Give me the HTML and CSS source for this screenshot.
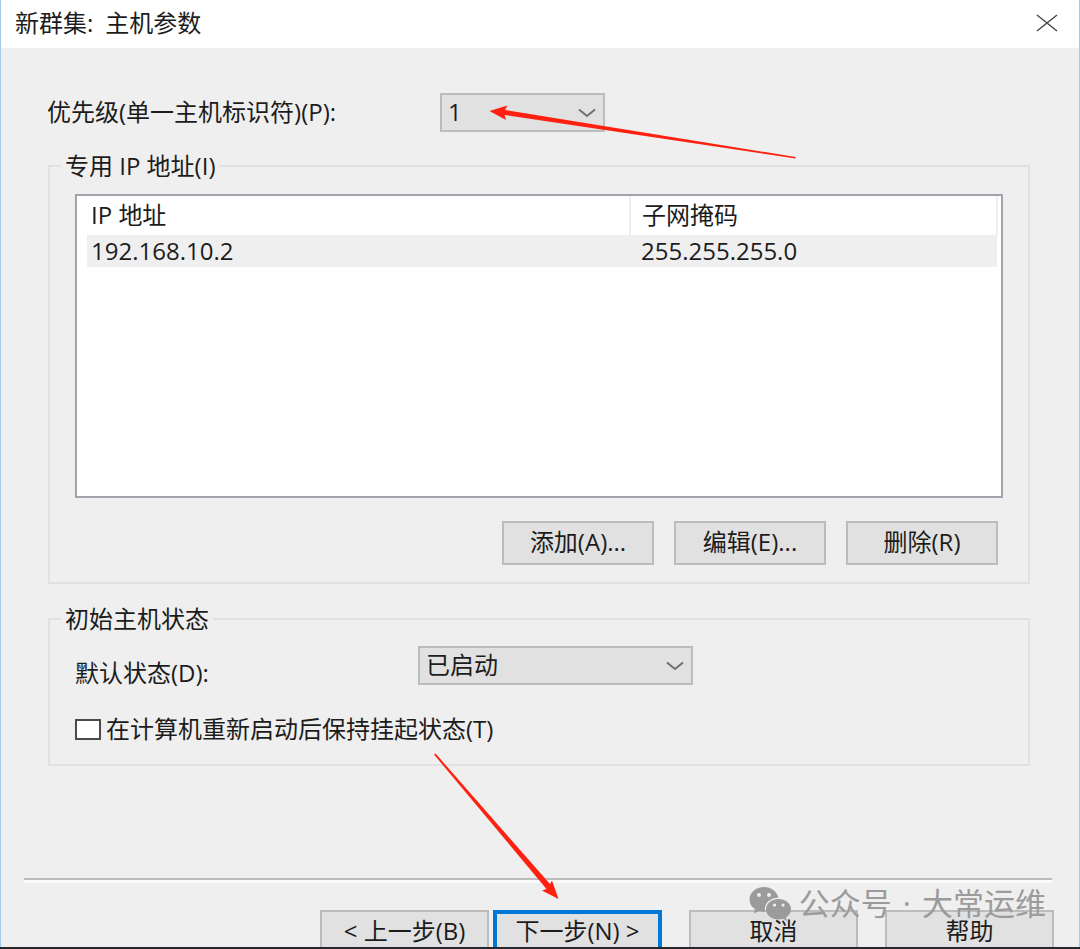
FILE: index.html
```html
<!DOCTYPE html>
<html lang="zh-CN">
<head>
    <meta charset="UTF-8">
    <meta name="viewport" content="width=device-width, initial-scale=1.0">
    <title>新群集: 主机参数</title>
    <link rel="stylesheet" href="styles.css">
</head>
<body>

    <div class="dialog">
        <header class="title-bar">
            <h1><span>新群集:</span> <span>主机参数</span></h1>
            <button type="button" class="close-button" aria-label="关闭">
                <svg width="22" height="18" viewBox="0 0 22 18"><path d="M1 1L21 17M21 1L1 17" stroke="#4a4a4a" stroke-width="1.5" fill="none"/></svg>
            </button>
        </header>

        <form class="dialog-body">
            <div class="field-row">
                <label for="priority">优先级(单一主机标识符)(P):</label>
                <div class="select-box priority-box">
                    <select id="priority">
                        <option>1</option>
                    </select>
                    <svg class="chevron" width="18" height="10" viewBox="0 0 18 10"><path d="M1 1.5L9 8L17 1.5" stroke="#707070" stroke-width="2" fill="none"/></svg>
                    <svg class="arrow arrow-priority" width="308" height="56" viewBox="0 0 308 56"><path d="M0.500 7L18.500 1.500L16 6L306.500 53V54.500L15.500 11L17 16Z" fill="#ff2010"/></svg>
                </div>
            </div>

            <fieldset class="ip-group">
                <legend>专用 IP 地址(I)</legend>
                <div class="list-view">
                    <table>
                        <thead>
                            <tr><th>IP 地址</th><th>子网掩码</th></tr>
                        </thead>
                        <tbody>
                            <tr><td>192.168.10.2</td><td>255.255.255.0</td></tr>
                        </tbody>
                    </table>
                </div>
                <div class="list-buttons">
                    <button type="button">添加(A)...</button>
                    <button type="button">编辑(E)...</button>
                    <button type="button">删除(R)</button>
                </div>
            </fieldset>

            <fieldset class="state-group">
                <legend>初始主机状态</legend>
                <div class="field-row">
                    <label for="state">默认状态(D):</label>
                    <div class="select-box state-box">
                        <select id="state">
                            <option>已启动</option>
                        </select>
                        <svg class="chevron" width="18" height="10" viewBox="0 0 18 10"><path d="M1 1.5L9 8L17 1.5" stroke="#707070" stroke-width="2" fill="none"/></svg>
                    </div>
                </div>
                <div class="check-row">
                    <input type="checkbox" id="keep-suspended">
                    <label for="keep-suspended">在计算机重新启动后保持挂起状态(T)</label>
                </div>
            </fieldset>
        </form>

        <footer class="dialog-footer">
            <button type="button">&lt; 上一步(B)</button>
            <button type="button" class="next-button">下一步(N) &gt;
                <svg class="arrow arrow-next" width="128" height="148" viewBox="0 0 128 148"><path d="M1 1.500L2.500 0.500L117 131L119 127.500L125.500 146L109 137.500L113.500 136Z" fill="#ff2010"/></svg>
            </button>
            <button type="button" class="cancel-button">取消</button>
            <button type="button" class="help-button">帮助</button>

            <div class="watermark">
                <svg width="42" height="36" viewBox="0 0 42 36">
                    <path fill="#9b9b9b" fill-rule="evenodd" d="M15 1C7 1 0.500 6.500 0.500 13.500C0.500 17.500 2.500 20.800 6 23L5 27.500L10 25C12 25.600 14 25.800 16 25.700C14.500 17.500 21.500 11.500 29.500 11.800C28 5.500 22 1 15 1ZM10 7A2 2 0 1 1 10 11A2 2 0 1 1 10 7ZM20 7A2 2 0 1 1 20 11A2 2 0 1 1 20 7Z"/>
                    <path fill="#9b9b9b" fill-rule="evenodd" d="M29.500 13C22.500 13 17 17.500 17 23.200C17 29 22.500 33.500 29.500 33.500C31 33.500 32.500 33.200 34 32.800L38 35L37 31.300C40 29.300 42 26.500 42 23.200C42 17.500 36.500 13 29.500 13ZM25.500 17.500A1.600 1.600 0 1 1 25.500 20.700A1.600 1.600 0 1 1 25.500 17.500ZM34 17.500A1.600 1.600 0 1 1 34 20.700A1.600 1.600 0 1 1 34 17.500Z"/>
                </svg>
                <p><span>公众号</span> <span>·</span> <span>大常运维</span></p>
            </div>
        </footer>
    </div>

</body>
</html>
```
FILE: styles.css
```css
* {
    box-sizing: border-box;
}
body {
    margin: 0;
    background-color: #efefef;
    color: #1c1c1c;
    font-family: "Open Sans", "Noto Sans CJK SC", sans-serif;
    font-size: 24px;
    line-height: 30px;
}
.dialog {
    display: flex;
    flex-direction: column;
    min-height: 100vh;
    border: solid #a5c9e8;
    border-width: 0 1px;
}

/* Title bar */
.title-bar {
    display: flex;
    justify-content: space-between;
    align-items: center;
    height: 48px;
    padding: 0 21px 2px 14px;
    background-color: #fff;
}
.title-bar h1 {
    display: flex;
    gap: 12px;
    margin: 0;
    font-size: 24px;
    font-weight: normal;
}
.close-button {
    display: flex;
    padding: 0;
    border: none;
    background: none;
}

/* Form controls */
button,
select {
    font: inherit;
    color: inherit;
    border: 2px solid #bcbcbc;
    border-radius: 0;
    background-color: #e1e1e1;
}
.select-box {
    position: relative;
}
.select-box select {
    display: block;
    appearance: none;
    width: 100%;
    height: 39px;
    padding: 0 6px 2px;
    line-height: 32px;
}
.chevron {
    position: absolute;
    right: 9px;
    top: 15px;
    pointer-events: none;
}
.field-row {
    display: flex;
    align-items: center;
}
.field-row label {
    flex: none;
}

.dialog-body {
    padding: 45px 49px 0 46px;
}
.dialog-body > .field-row label {
    width: 393px;
    padding-bottom: 2px;
}
.priority-box {
    width: 165px;
}
.state-box {
    width: 275px;
}

/* Group boxes */
fieldset {
    min-width: 0;
    margin: 0 0 0 1px;
    border: 2px solid #e1e1e1;
}
legend {
    padding: 0 4px;
}
.ip-group {
    margin-top: 19px;
    padding: 13px 25px 17px 25px;
}
.ip-group legend,
.state-group legend {
    margin-left: -14px;
}
.state-group {
    margin-top: 20px;
    padding: 12px 25px 20px 25px;
}
.state-group .field-row {
    align-items: flex-start;
}
.state-group .field-row label {
    width: 343px;
    padding-top: 12px;
}

/* Address list */
.list-view {
    min-height: 304px;
    padding: 0 3px 0 10px;
    border: 2px solid #a0a3ab;
    background-color: #fff;
}
.list-view table {
    width: 100%;
    border-collapse: collapse;
    table-layout: fixed;
}
.list-view th,
.list-view td {
    padding: 0 4px;
    text-align: left;
    font-weight: normal;
}
.list-view th {
    height: 39px;
    padding-bottom: 2px;
    border-right: 2px solid #efefef;
}
.list-view th:first-child {
    width: 543px;
}
.list-view th + th,
.list-view td + td {
    padding-left: 11px;
}
.list-view td {
    height: 32px;
    background-color: #efefef;
}
.list-buttons {
    display: flex;
    justify-content: flex-end;
    gap: 20px;
    margin-top: 23px;
    padding-right: 5px;
}
.list-buttons button {
    width: 152px;
    height: 44px;
    padding: 0 0 2px;
}

.check-row {
    display: flex;
    align-items: center;
    gap: 5px;
    margin-top: 26px;
}
.check-row input {
    appearance: none;
    width: 26px;
    height: 21px;
    margin: 0;
    border: 2px solid #4a4a4a;
    background-color: #fff;
}

/* Footer, its buttons run into the bottom edge */
.dialog-footer {
    position: relative;
    display: flex;
    justify-content: flex-end;
    margin: auto -1px 0;
    padding: 30px 26px 0 24px;
    border-bottom: 2px solid #25272a;
}
.dialog-footer::before {
    content: "";
    position: absolute;
    top: -2px;
    left: 24px;
    right: 28px;
    height: 3px;
    border-top: 2px solid #bcbcbc;
    background-color: #fafafa;
}
.dialog-footer button {
    width: 169px;
    height: 37px;
    padding: 3px 0 0;
    border-bottom: none;
}
.dialog-footer .next-button {
    position: relative;
    margin-left: 4px;
    border: 4px solid #0078d7;
    border-bottom: none;
    padding-top: 1px;
}
.dialog-footer .cancel-button,
.dialog-footer .help-button {
    margin-left: 27px;
}

/* Red pointers over the controls */
.arrow {
    position: absolute;
    pointer-events: none;
    z-index: 1;
}
.arrow-priority {
    left: 49px;
    top: 11px;
}
.arrow-next {
    left: -64px;
    top: -161px;
}

.watermark {
    position: absolute;
    right: 34px;
    top: 6px;
    display: flex;
    align-items: center;
    gap: 8px;
    color: #9b9b9b;
    font-size: 31px;
    line-height: 34px;
    pointer-events: none;
}
.watermark p {
    display: flex;
    gap: 11px;
    margin: 0;
    padding-bottom: 2px;
}
```
